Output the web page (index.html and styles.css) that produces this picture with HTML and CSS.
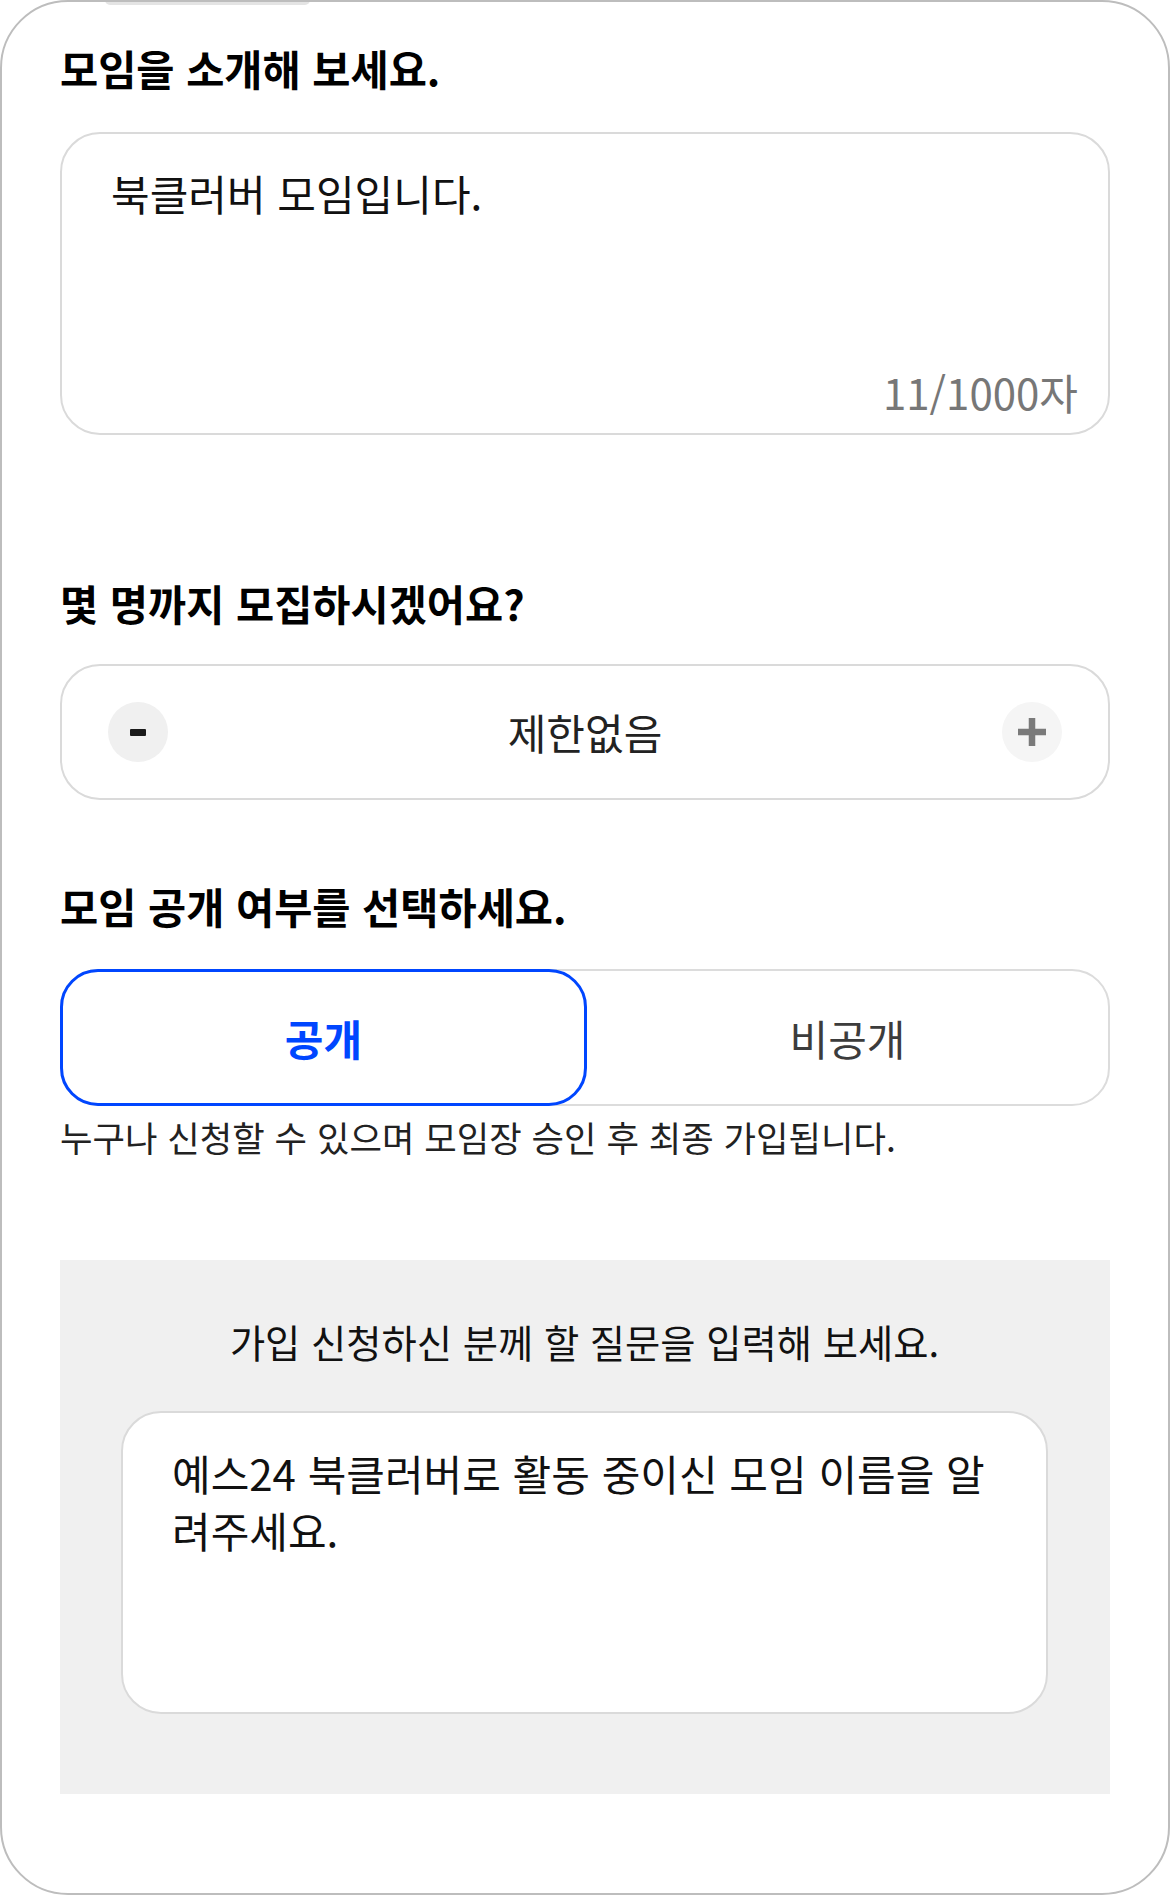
FILE: index.html
```html
<!DOCTYPE html>
<html lang="ko">
	<head>
		<meta charset="UTF-8">
		<meta name="viewport" content="width=device-width, initial-scale=1.0">
		<title>모임 만들기</title>
		<link rel="stylesheet" href="styles.css">
	</head>
	<body>
		<div class="frame">
			<!-- 상단 손잡이 -->
			<div class="handle"></div>

			<h2 class="title">모임을 소개해 보세요.</h2>
			<div class="intro-box">
				<p class="intro-text">북클러버 모임입니다.</p>
				<p class="counter">11/1000자</p>
			</div>

			<h2 class="title title-gap">몇 명까지 모집하시겠어요?</h2>
			<div class="stepper">
				<button class="step-btn minus" aria-label="감소">
					<svg width="16" height="7" viewBox="0 0 16 7"><rect width="16" height="7" rx="1" fill="#1a1a1a"/></svg>
				</button>
				<span class="step-value">제한없음</span>
				<button class="step-btn plus" aria-label="증가">
					<svg width="28" height="28" viewBox="0 0 28 28"><rect x="10.75" y="0" width="6.5" height="28" fill="#7a7a7a"/><rect x="0" y="10.75" width="28" height="6.5" fill="#7a7a7a"/></svg>
				</button>
			</div>

			<h2 class="title title-gap2">모임 공개 여부를 선택하세요.</h2>
			<div class="toggle">
				<button class="toggle-btn active">공개</button>
				<button class="toggle-btn">비공개</button>
			</div>
			<p class="desc">누구나 신청할 수 있으며 모임장 승인 후 최종 가입됩니다.</p>

			<!-- 가입 질문 -->
			<div class="question">
				<p class="question-title">가입 신청하신 분께 할 질문을 입력해 보세요.</p>
				<div class="question-box">
					<p class="question-text">예스24 북클러버로 활동 중이신 모임 이름을 알려주세요.</p>
				</div>
			</div>
		</div>
	</body>
</html>
```

FILE: styles.css
```css
* {
	margin: 0;
	padding: 0;
	box-sizing: border-box;
}

body {
	background: #fff;
	font-family: "Noto Sans CJK KR", "Noto Sans", sans-serif;
	color: #111;
}

/* 바깥 화면 테두리 */
.frame {
	position: relative;
	width: 1170px;
	height: 1895px;
	border: 2px solid #bdbdbd;
	border-radius: 68px;
	padding: 40px 58px 0;
	overflow: hidden;
}

.handle {
	position: absolute;
	left: 103px;
	top: -2px;
	width: 205px;
	height: 5px;
	background: #e4e4e4;
	border-radius: 0 0 6px 6px;
}

/* 섹션 제목 */
.title {
	font-size: 41.5px;
	font-weight: 700;
	line-height: 52px;
	color: #000;
}

.title-gap {
	margin-top: 142px;
}

.title-gap2 {
	margin-top: 80px;
}

/* 소개 입력 박스 */
.intro-box {
	margin-top: 38px;
	height: 303px;
	border: 2px solid #dadada;
	border-radius: 40px;
	padding: 31px 30px 13px 49px;
	display: flex;
	flex-direction: column;
}

.intro-text {
	font-size: 42px;
	line-height: 56px;
	color: #111;
}

.counter {
	margin-top: auto;
	align-self: flex-end;
	font-size: 42px;
	line-height: 56px;
	color: #777;
}

/* 인원 선택 */
.stepper {
	margin-top: 35px;
	height: 136px;
	border: 2px solid #dadada;
	border-radius: 40px;
	padding: 0 46px;
	display: flex;
	align-items: center;
	justify-content: space-between;
}

.step-btn {
	width: 60px;
	height: 60px;
	border: none;
	border-radius: 50%;
	display: flex;
	align-items: center;
	justify-content: center;
	cursor: pointer;
}

.step-btn.minus {
	background: #f0f0f0;
}

.step-btn.plus {
	background: #f5f5f5;
}

.step-value {
	font-size: 42px;
	line-height: 56px;
	color: #222;
}

/* 공개 여부 토글 */
.toggle {
	margin-top: 37px;
	height: 137px;
	border: 2px solid #dcdcdc;
	border-radius: 38px;
	display: flex;
}

.toggle-btn {
	flex: 1;
	border: none;
	background: transparent;
	font-family: inherit;
	font-size: 42px;
	color: #3c3c3c;
	cursor: pointer;
}

.toggle-btn.active {
	margin: -2px 0 -2px -2px;
	border: 3px solid #0046ff;
	border-radius: 38px;
	background: #fff;
	color: #0046ff;
	font-weight: 700;
	position: relative;
	z-index: 1;
}

.desc {
	margin-top: 9px;
	font-size: 35.3px;
	line-height: 44px;
	color: #222;
}

/* 가입 질문 영역 */
.question {
	margin-top: 101px;
	height: 534px;
	background: #f0f0f0;
	padding: 57px 62px 0 61px;
}

.question-title {
	font-size: 38.3px;
	line-height: 50px;
	text-align: center;
	color: #111;
}

.question-box {
	margin-top: 44px;
	height: 303px;
	background: #fff;
	border: 2px solid #dadada;
	border-radius: 40px;
	padding: 31px 49px 0 49px;
}

.question-text {
	font-size: 42px;
	line-height: 57px;
	color: #111;
}
```
